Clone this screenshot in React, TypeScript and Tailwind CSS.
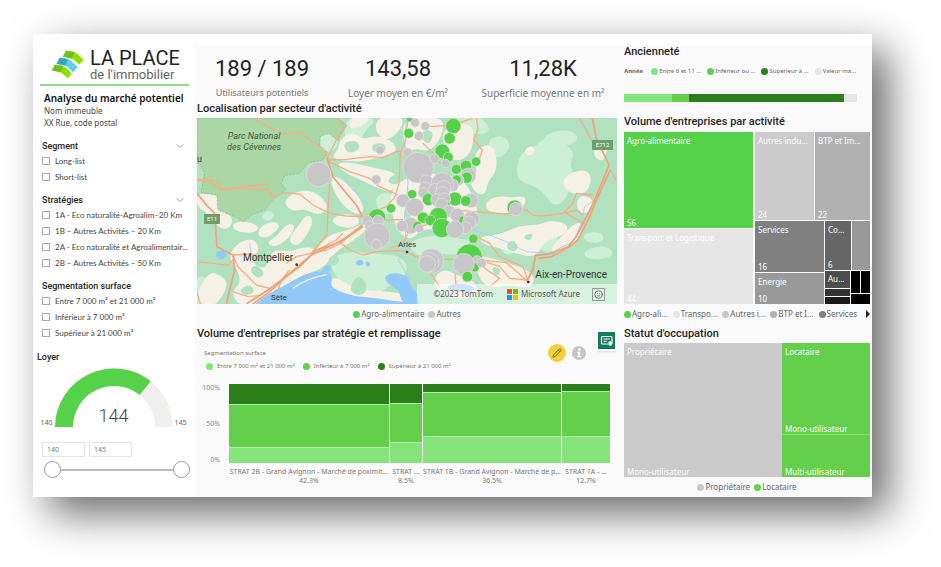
// src/App.tsx
// Market analysis dashboard for La Place de l'immobilier

import React, { useState } from "react";
import { ChevronDown, Pencil, Smile } from "lucide-react";

const COLORS = {
  green: "#56d14a",
  grey: "#c8c6c8",
  land: "#b1e2c0",
  road: "#f6ae84",
  highway: "#f3a074",
  beige: "#f6f1e6",
  pale: "#cdefd6",
  water: "#92c9fb",
};

interface LegendItem {
  label: string;
  dot: string;
}

const SEGMENT = ["Long-list", "Short-list"];
const STRATEGIES = [
  "1A - Eco naturalité-Agroalim–20 Km",
  "1B – Autres Activités – 20 Km",
  "2A - Eco naturalité et Agroalimentair...",
  "2B – Autres Activités – 50 Km",
];
const SURFACES = [
  "Entre 7 000 m² et 21 000 m²",
  "Inférieur à 7 000 m²",
  "Supérieur à 21 000 m²",
];

const KPIS = [
  { value: "189 / 189", label: "Utilisateurs potentiels", size: "text-[9px]" },
  { value: "143,58", label: "Loyer moyen en €/m²", size: "text-[10px]" },
  { value: "11,28K", label: "Superficie moyenne en m²", size: "text-[10px]" },
];

const MAP_LEGEND: LegendItem[] = [
  { label: "Agro-alimentaire", dot: "bg-[#56d14a]" },
  { label: "Autres", dot: "bg-[#c8c8c8]" },
];

const AGE_LEGEND: LegendItem[] = [
  { label: "Entre 6 et 11 ...", dot: "bg-[#86e57a]" },
  { label: "Inférieur ou ...", dot: "bg-[#64cf4b]" },
  { label: "Supérieur à ...", dot: "bg-[#2b7f1b]" },
  { label: "Valeur ma...", dot: "bg-[#e6e6e6]" },
];

const SURFACE_LEGEND: LegendItem[] = [
  { label: "Entre 7 000 m² et 21 000 m²", dot: "bg-[#86e57a]" },
  { label: "Inférieur à 7 000 m²", dot: "bg-[#64cf4b]" },
  { label: "Supérieur à 21 000 m²", dot: "bg-[#2b7f1b]" },
];

const ACTIVITY_LEGEND: LegendItem[] = [
  { label: "Agro-ali...", dot: "bg-[#56d14a]" },
  { label: "Transpo...", dot: "bg-[#e6e6e6]" },
  { label: "Autres i...", dot: "bg-[#c8c8c8]" },
  { label: "BTP et I...", dot: "bg-[#b0b0b0]" },
  { label: "Services", dot: "bg-[#808080]" },
];

const STATUS_LEGEND: LegendItem[] = [
  { label: "Propriétaire", dot: "bg-[#c8c8c8]" },
  { label: "Locataire", dot: "bg-[#64cf4b]" },
];

// width of each column, then dark / medium / light shares of its height
const MEKKO = [
  { name: "STRAT 2B - Grand Avignon - Marché de poximit...", share: 42.3, parts: [26, 55, 19] },
  { name: "STRAT ...", share: 8.5, parts: [25, 49, 26] },
  { name: "STRAT 1B - Grand Avignon - Marché de p...", share: 36.5, parts: [10, 56, 34] },
  { name: "STRAT 1A - ...", share: 12.7, parts: [9, 57, 34] },
];
const MEKKO_FILLS = ["bg-[#2b7f1b]", "bg-[#64cf4b]", "bg-[#86e57a]"];

// [x, y, radius, is agro-alimentaire]
const BUBBLES: [number, number, number, boolean][] = [
  [387, 193, 37, false],
  [571, 120, 13, false],
  [560, 209, 14, false],
  [604, 295, 14, true],
  [562, 322, 26, true],
  [533, 332, 16, false],
  [566, 332, 17, false],
  [540, 348, 15, false],
  [562, 378, 39, false],
  [560, 404, 15, false],
  [660, 26, 10, true],
  [676, 38, 13, false],
  [707, 48, 13, false],
  [688, 78, 14, false],
  [657, 70, 15, true],
  [791, 48, 23, true],
  [780, 85, 17, true],
  [654, 128, 14, false],
  [686, 173, 46, false],
  [758, 124, 22, true],
  [776, 142, 15, true],
  [735, 146, 14, false],
  [768, 160, 13, false],
  [800, 178, 15, true],
  [829, 168, 17, true],
  [859, 155, 14, true],
  [836, 197, 23, false],
  [831, 203, 17, true],
  [806, 210, 17, false],
  [801, 209, 14, true],
  [710, 215, 20, false],
  [788, 226, 19, false],
  [758, 222, 34, false],
  [706, 234, 18, false],
  [700, 248, 15, false],
  [667, 253, 14, true],
  [640, 272, 20, false],
  [675, 292, 27, false],
  [717, 268, 19, true],
  [737, 240, 20, false],
  [762, 234, 22, false],
  [758, 252, 22, false],
  [796, 267, 21, true],
  [742, 270, 19, false],
  [764, 268, 19, false],
  [768, 286, 14, true],
  [756, 284, 19, false],
  [844, 272, 22, false],
  [828, 273, 16, true],
  [778, 304, 18, false],
  [803, 316, 21, false],
  [746, 319, 27, true],
  [700, 323, 17, true],
  [722, 331, 16, true],
  [822, 332, 15, true],
  [845, 328, 24, false],
  [838, 338, 20, false],
  [828, 353, 18, false],
  [662, 347, 25, false],
  [684, 349, 15, true],
  [689, 355, 13, false],
  [637, 348, 17, false],
  [756, 354, 29, true],
  [796, 358, 26, false],
  [975, 293, 23, true],
  [979, 297, 20, false],
  [851, 402, 14, false],
  [851, 386, 14, true],
  [839, 441, 39, true],
  [862, 452, 15, false],
  [855, 472, 14, true],
  [822, 462, 32, false],
  [876, 459, 14, false],
  [833, 500, 16, true],
  [725, 453, 37, false],
  [718, 457, 30, false],
  [712, 462, 25, false],
];

const ROADS = [
  "M190 24 L225 45 L275 72 L335 68 L360 90 L400 115 L418 150",
  "M445 24 L465 55 L440 90 L412 145",
  "M22 210 L60 215 L95 240 L150 235 L235 240 L250 262 L285 248 L330 252 L370 285 L420 310 L470 318 L520 320",
  "M235 240 L232 222 L95 238 L85 212 L22 208",
  "M418 150 L470 148 L540 140 L580 142 L620 125 L660 122",
  "M418 155 L480 185 L540 205 L570 230 L625 255",
  "M655 24 L648 90 L632 130 L628 220 L615 262 L590 290 L520 320",
  "M418 150 L420 220 L415 300 L412 372 L365 430",
  "M22 455 L70 460 L115 466 L130 450",
  "M130 435 L145 470 L200 525 L240 535",
  "M130 435 L180 432 L220 444",
  "M290 460 L320 440 L365 430 L440 390 L460 370",
  "M455 400 L470 385 L520 350",
  "M365 430 L410 420 L455 400 L480 420 L520 435 L560 425 L620 422 L650 425 L690 445 L780 448 L860 448",
  "M520 330 L600 330 L640 328",
  "M690 350 L760 330 L800 300 L850 305 L950 312 L1010 300 L1030 316 L1060 318 L1120 310 L1160 300 L1180 315",
  "M22 545 L32 582",
  "M130 545 L175 560 L215 556",
  "M265 540 L275 510 L300 480",
  "M720 50 L790 45 L850 24",
  "M860 24 L865 60 L852 90 L878 120 L868 150",
  "M700 100 L730 130 L760 170",
  "M660 360 L640 400 L600 415",
  "M860 380 L900 400 L930 440 L1000 470 L1015 510",
  "M700 460 L730 500 L750 530",
  "M796 490 L800 540",
  "M860 440 L885 455 L930 470 L960 505 L1015 510 L1030 470 L1038 435",
  "M860 455 L900 485 L930 505 L900 530",
  "M870 450 L950 458 L1010 510",
  "M1120 310 L1150 280 L1160 250 L1210 255",
  "M1130 310 L1190 345",
  "M1168 24 L1190 60 L1210 100",
  "M1262 180 L1282 215",
];

const HIGHWAYS = [
  "M22 250 L50 285 L75 310 L82 410 L130 435 L135 480 L120 540 L110 582",
  "M412 145 L430 200 L470 250 L500 285 L518 320",
  "M190 582 L240 545 L300 490 L365 435 L440 400 L520 350",
  "M170 582 L235 540 L330 470 L380 420 L455 395 L518 345",
  "M1208 24 L1220 85 L1258 165 L1240 210 L1215 270 L1195 310 L1160 380 L1135 410 L1080 432 L1038 436 L1030 480 L1010 515",
  "M1262 180 L1225 260 L1200 320 L1165 390 L1140 410 L1085 440 L1045 445",
];

const BEIGE_AREAS = [
  "22,258 60,255 84,262 86,300 125,322 118,350 95,352 70,325 50,300 30,290",
  "150,400 190,390 205,420 178,440 190,470 225,480 240,462 250,425 300,430 330,420 365,415 380,430 400,400 430,375 480,365 520,345 525,360 480,392 430,425 400,470 340,490 285,520 235,548 200,582 150,582 130,545 160,520 145,470 120,440",
  "235,400 262,385 290,350 312,345 300,375 262,405",
  "300,390 330,350 352,318 366,330 350,370 322,405",
  "22,560 60,490 90,500 110,520 92,560 70,582 50,582",
  "285,275 320,250 360,245 400,270 410,300 380,310 345,290 310,300",
  "130,345 160,338 205,350 190,365 145,360",
  "205,372 225,345 262,340 262,355 230,380",
  "430,140 450,125 455,90 490,70 520,95 560,80 610,100 615,128 560,138 520,150 470,148",
  "440,160 500,165 560,180 610,190 625,220 600,240 570,232 530,212 480,190",
  "425,200 460,215 500,255 520,300 505,310 470,290 440,250",
  "425,330 470,315 505,325 500,345 460,350",
  "490,24 540,24 510,48 480,52",
  "570,24 640,24 625,60 590,90 560,60",
  "640,24 760,24 750,80 720,120 680,110 650,120",
  "760,60 840,40 850,90 830,140 790,150 770,110",
  "870,120 900,105 918,145 912,190 890,210 885,250 860,245 845,215 870,190 855,150",
  "600,240 680,195 800,200 845,250 865,330 820,370 700,345 660,390 620,350",
  "890,280 925,262 970,268 1005,262 1000,285 960,308 900,302",
  "870,385 930,380 990,352 1050,350 1080,335 1130,345 1125,370 1060,390 1045,425 1020,435 980,425 930,410 890,400",
  "860,440 930,455 1000,480 1030,500 1020,530 960,520 900,530 870,500",
  "1120,215 1150,190 1195,185 1200,220 1180,250 1140,245",
  "1170,260 1210,270 1190,310 1165,295",
  "1085,425 1110,390 1150,350 1175,340 1160,385 1125,420",
  "1215,110 1250,100 1240,150 1220,140",
  "425,505 455,515 495,545 600,550 655,560 650,582 520,582 440,550",
  "730,520 760,480 800,500 860,520 850,560 780,560",
  "1010,120 1030,112 1028,130 1012,132",
];

const PALE_AREAS = [
  "470,24 560,24 520,60 500,110 470,95",
  "392,80 420,72 445,95 425,125 397,112",
  "985,170 1000,130 1040,115 1060,90 1110,100 1150,125 1135,165 1150,200 1125,265 1095,285 1070,250 1040,225 990,210",
  "1060,90 1090,70 1140,65 1165,85 1130,105 1085,105",
  "790,24 870,24 900,60 870,70 830,60 800,60",
  "900,90 940,80 960,110 930,140 905,130",
  "930,400 965,392 975,425 945,430",
  "22,500 60,510 70,540 50,582 22,582",
  "420,450 480,430 560,435 640,445 650,490 600,520 560,550 500,545 450,510",
  "660,400 720,380 820,390 870,410 830,430 740,425 680,435",
  "560,260 600,250 625,290 600,310 570,300",
  "540,185 580,195 585,215 550,212",
  "218,318 240,305 252,318 232,330",
  "1060,395 1100,385 1110,410 1060,425",
  "1180,430 1230,410 1270,425 1250,440 1210,445",
  "1180,375 1230,370 1240,390 1200,395",
];

// woods inside the plains
const WOODS = [
  "180,480 200,465 225,490 205,505",
  "460,100 500,92 510,118 475,130",
  "545,105 580,100 590,122 555,128",
  "590,215 620,190 628,225",
  "905,470 935,478 920,500",
  "640,300 665,310 655,335",
  "952,400 975,392 985,420 958,422",
  "1000,380 1030,370 1020,392",
  "150,540 180,525 195,545 165,556",
  "415,445 440,435 450,455 425,470",
  "480,540 500,500 525,510 530,545 505,556",
  "700,60 730,66 722,100 700,92",
];

const WATER_AREAS = [
  "190,590 240,550 285,530 310,515 345,495 385,485 420,488 425,505 420,530 450,548 500,562 560,566 620,576 670,580 670,600 190,600",
  "585,500 612,490 640,495 660,512 648,535 660,560 632,548 615,528 595,520",
  "630,495 655,500 662,530 680,548 690,590 650,590 628,550",
  "395,485 410,466 425,470 415,490",
  "78,430 100,422 112,435 98,448 84,444",
  "498,455 515,450 522,460 506,468",
  "528,454 542,460 534,472",
  "768,530 800,522 850,528 850,545 800,545",
];

// rounds a "x,y x,y ..." outline by running curves through the edge midpoints
function blob(points: string) {
  const pts = points.split(" ").map((p) => p.split(",").map(Number));
  const mid = (i: number) => {
    const [ax, ay] = pts[i % pts.length];
    const [bx, by] = pts[(i + 1) % pts.length];
    return `${(ax + bx) / 2} ${(ay + by) / 2}`;
  };
  const curves = pts.map((_, i) => {
    const [x, y] = pts[(i + 1) % pts.length];
    return `Q${x} ${y} ${mid(i + 1)}`;
  });
  return `M${mid(0)} ${curves.join(" ")} Z`;
}

function Blobs({ areas, fill, edge }: { areas: string[]; fill: string; edge: number }) {
  return (
    <g fill={fill} stroke={fill} strokeWidth={edge} strokeLinejoin="round">
      {areas.map((area) => (
        <path key={area} d={blob(area)} />
      ))}
    </g>
  );
}

function Logo() {
  return (
    <div className="flex items-center gap-1.5 pl-[19px] h-[39px]">
      <svg viewBox="0 0 100 90" className="w-8 h-[29px] shrink-0" aria-hidden="true">
        <path d="M44 2 L66 5 Q74 7 80 12 L99 31 L85 46 L68 30 Q63 26 56 25 L34 21 Z" fill="#8ee000" />
        <path d="M44 2 L70 6 L62 26 L34 21 Z" fill="#68c51c" />
        <path d="M24 24 L46 27 Q54 29 60 34 L80 53 L66 69 L48 52 Q43 48 36 47 L14 43 Z" fill="#5cd0e2" />
        <path d="M24 24 L50 28 L42 48 L14 43 Z" fill="#3aa2c4" />
        <path d="M9 46 L31 49 Q39 51 45 56 L62 73 L50 89 L32 73 Q27 69 20 68 L0 64 Z" fill="#8ee000" />
        <path d="M9 46 L35 50 L27 69 L0 64 Z" fill="#68c51c" />
      </svg>
      <div className="font-['Roboto',sans-serif] whitespace-nowrap">
        <div className="text-[20px] leading-[19px] text-[#222]">LA PLACE</div>
        <div className="text-[13px] leading-[13px] text-[#666]">de l'immobilier</div>
      </div>
    </div>
  );
}

function Title({ children }: { children: React.ReactNode }) {
  return (
    <h2 className="font-['Roboto',sans-serif] font-medium text-[11px] leading-[14px] text-[#252525] whitespace-nowrap">
      {children}
    </h2>
  );
}

function CheckGroup({
  title,
  items,
  collapsible,
}: {
  title: string;
  items: string[];
  collapsible?: boolean;
}) {
  return (
    <fieldset className="pl-[9px] pr-2 mb-2 min-w-0">
      <legend className="flex w-full h-3.5 items-center justify-between text-[9px] leading-[14px] font-medium text-[#252525] font-['Roboto',sans-serif]">
        {title}
        {collapsible && (
          <button type="button" aria-label={title}>
            <ChevronDown className="w-3 h-3 text-[#777]" strokeWidth={1.5} />
          </button>
        )}
      </legend>
      {items.map((item) => (
        <label key={item} className="flex h-4 items-center gap-[5px] font-['Lato',sans-serif] text-[8px] text-[#444] whitespace-nowrap">
          <input
            type="checkbox"
            className="appearance-none w-2 h-2 shrink-0 border border-[#a8a8a8] bg-white checked:bg-[#56d14a]"
          />
          {item}
        </label>
      ))}
    </fieldset>
  );
}

function Legend({
  items,
  className,
}: {
  items: LegendItem[];
  className: string;
}) {
  return (
    <ul className={`flex items-center whitespace-nowrap text-[#666] ${className}`}>
      {items.map((item) => (
        <li key={item.label} className="flex items-center gap-px">
          <span className={`w-[7px] h-[7px] rounded-full shrink-0 ${item.dot}`} />
          {item.label}
        </li>
      ))}
    </ul>
  );
}

function RentGauge() {
  const [low, setLow] = useState(140);
  const [high, setHigh] = useState(145);
  const range =
    "col-start-1 row-start-1 w-full h-[17px] appearance-none bg-transparent pointer-events-none [&::-webkit-slider-thumb]:appearance-none [&::-webkit-slider-thumb]:pointer-events-auto [&::-webkit-slider-thumb]:w-[17px] [&::-webkit-slider-thumb]:h-[17px] [&::-webkit-slider-thumb]:rounded-full [&::-webkit-slider-thumb]:border [&::-webkit-slider-thumb]:border-[#999] [&::-webkit-slider-thumb]:bg-white";

  return (
    <section className="pt-0.5">
      <h2 className="pl-1 font-['Roboto',sans-serif] font-medium text-[9px] leading-3 text-[#252525]">Loyer</h2>
      <div className="flex items-end justify-center gap-0.5 mt-1 text-[7px] leading-[8px] text-[#666]">
        <span>140</span>
        <div className="grid items-end justify-items-center">
          <svg viewBox="0 0 118 60" className="col-start-1 row-start-1 w-[118px] h-[60px]" aria-hidden="true">
            <path d="M95.8 14.3 A59 59 0 0 1 118 60 H100 A41 41 0 0 0 84.6 28 Z" fill="#f1f0ef" />
            <path d="M0 60 A59 59 0 0 1 95.8 14.3 L84.6 28 A41 41 0 0 0 18 60 Z" fill="#56d14a" />
          </svg>
          <span className="col-start-1 row-start-1 font-['Roboto',sans-serif] font-light text-[18px] leading-[22px] text-[#444]">
            144
          </span>
        </div>
        <span>145</span>
      </div>
      <div className="flex gap-1 pl-[9px] mt-[15px]">
        <input
          aria-label="Loyer minimum"
          className="w-[43px] h-[15px] border border-[#e4e4e4] px-1 text-[7px] text-[#777]"
          value={low}
          onChange={(e) => setLow(Number(e.target.value))}
        />
        <input
          aria-label="Loyer maximum"
          className="w-[43px] h-[15px] border border-[#e4e4e4] px-1 text-[7px] text-[#777]"
          value={high}
          onChange={(e) => setHigh(Number(e.target.value))}
        />
      </div>
      <div className="grid items-center pl-[11px] pr-1 mt-1">
        <div className="col-start-1 row-start-1 h-0.5 mx-2 bg-[#bdbdbd]" />
        <input type="range" aria-label="Borne basse" min={140} max={145} value={low} onChange={(e) => setLow(Number(e.target.value))} className={range} />
        <input type="range" aria-label="Borne haute" min={140} max={145} value={high} onChange={(e) => setHigh(Number(e.target.value))} className={range} />
      </div>
    </section>
  );
}

function ActivityMap() {
  return (
    <div className="relative mt-0.5 h-[186px] overflow-hidden font-['Roboto',sans-serif] text-[#333] whitespace-nowrap">
      <svg viewBox="22 24 1260 558" preserveAspectRatio="xMidYMid slice" className="w-full h-full" aria-hidden="true">
        <rect x="22" y="24" width="1260" height="558" fill={COLORS.land} />
        <Blobs areas={PALE_AREAS} fill={COLORS.pale} edge={10} />
        <Blobs areas={BEIGE_AREAS} fill={COLORS.beige} edge={10} />
        <Blobs areas={WOODS} fill={COLORS.land} edge={4} />
        <path
          d="M22 24 H445 L472 48 L455 65 L445 92 L418 70 L392 78 L390 108 L412 125 L400 150 L355 158 L330 190 L285 196 L275 220 L288 240 L250 268 L225 300 L190 312 L162 335 L140 322 L85 300 L82 255 L34 248 L45 190 L30 160 L22 160 Z"
          fill="#aad7a5"
          stroke="#7fbb88"
          strokeWidth="2"
          strokeDasharray="8 3"
        />
        <Blobs areas={WATER_AREAS} fill={COLORS.water} edge={4} />
        <path d="M310 535 Q350 505 410 494" fill="none" stroke={COLORS.beige} strokeWidth="4" />
        <g fill="none" stroke="#a8d4f5" strokeWidth="3">
          <path d="M650 24 L645 120 L655 220 L645 320 L650 420 L625 450 L650 490 L670 540" />
          <path d="M850 360 L900 375 L950 395 L1010 425 L1080 430 L1150 395 L1175 340 L1185 290 L1215 270" />
          <path d="M1170 24 L1200 70 L1225 110 L1262 150" />
          <path d="M180 400 L185 440 L160 455" />
          <path d="M455 190 L480 230 L530 280" />
        </g>
        <g fill="none" stroke={COLORS.road} strokeWidth="4" strokeLinejoin="round">
          {ROADS.map((d) => (
            <path key={d} d={d} />
          ))}
        </g>
        <g fill="none" stroke={COLORS.highway} strokeWidth="5" strokeLinejoin="round">
          {HIGHWAYS.map((d) => (
            <path key={d} d={d} />
          ))}
        </g>
        {BUBBLES.map(([x, y, r, agro]) => (
          <circle
            key={`${x}-${y}-${r}`}
            cx={x}
            cy={y}
            r={r}
            fill={agro ? COLORS.green : COLORS.grey}
            stroke="#e6e6e6"
            strokeWidth="2"
          />
        ))}
        <circle cx="321" cy="464" r="4" fill="#333" />
        <circle cx="652" cy="426" r="4" fill="#333" />
        <circle cx="1016" cy="516" r="4" fill="#333" />
      </svg>
      <span className="absolute left-[30px] top-[13px] text-[9px] leading-[11px] italic text-center text-[#3c5a3c]">
        Parc National
        <br />
        des Cévennes
      </span>
      <span className="absolute left-0 top-[35px] text-[9px] leading-3">u</span>
      <span className="absolute left-[7px] top-[96px] w-4 text-center bg-[#6c9f6c] text-white text-[6px] leading-[10px]">E11</span>
      <span className="absolute right-1 top-[22px] w-[21px] text-center bg-[#6c9f6c] text-white text-[6px] leading-[10px]">E712</span>
      <span className="absolute left-[46px] top-[134px] text-[10px] leading-3">Montpellier</span>
      <span className="absolute left-[74px] top-[174px] text-[8px] leading-3">Sète</span>
      <span className="absolute left-[201px] top-[121px] text-[8px] leading-3">Arles</span>
      <span className="absolute right-[10px] top-[151px] text-[10px] leading-3">Aix-en-Provence</span>
      <div className="absolute right-0 bottom-0 flex items-center h-5 pl-[17px] pr-3 bg-white/50 font-['Noto_Sans',sans-serif] text-[8px] text-[#555]">
        <span>©2023 TomTom</span>
        <svg viewBox="0 0 11 11" className="w-[11px] h-[11px] ml-[14px] mr-[3px]" aria-hidden="true">
          <rect width="5" height="5" fill="#f25022" />
          <rect x="6" width="5" height="5" fill="#7fba00" />
          <rect y="6" width="5" height="5" fill="#00a4ef" />
          <rect x="6" y="6" width="5" height="5" fill="#ffb900" />
        </svg>
        <span>Microsoft Azure</span>
        <button type="button" aria-label="Feedback" className="ml-3 w-[13px] h-[13px] flex items-center justify-center border border-[#999]">
          <Smile className="w-[9px] h-[9px]" />
        </button>
      </div>
    </div>
  );
}

function StrategyChart() {
  return (
    <section className="mt-[3px]">
      <div className="flex justify-between h-11">
        <div>
          <Title>Volume d'entreprises par stratégie et remplissage</Title>
          <div className="pl-[7px] mt-[7px] text-[6px] leading-[10px] text-[#777]">Segmentation surface</div>
          <ul className="flex gap-2 pl-[9px] mt-[3px] text-[6px] leading-[10px] text-[#777] whitespace-nowrap">
            {SURFACE_LEGEND.map((item) => (
              <li key={item.label} className="flex items-center gap-1">
                <span className={`w-[7px] h-[7px] rounded-full ${item.dot}`} />
                {item.label}
              </li>
            ))}
          </ul>
        </div>
        <div className="flex items-start gap-2.5">
          <div className="flex items-center gap-1.5 pt-[17px]">
            <button type="button" aria-label="Modifier" className="w-[18px] h-[18px] rounded-full bg-[#f2cf3b] flex items-center justify-center">
              <Pencil className="w-2.5 h-2.5 text-[#6b5b1c]" />
            </button>
            <button type="button" aria-label="Information" className="w-3.5 h-3.5 rounded-full bg-[#c4c4c4] flex items-center justify-center">
              <svg viewBox="0 0 14 14" className="w-3.5 h-3.5" fill="#fff" aria-hidden="true">
                <circle cx="7.4" cy="3.6" r="1.3" />
                <path d="M5.4 5.8 H8.2 V10 H9 V11.2 H5.2 V10 H6 V7 H5.4 Z" />
              </svg>
            </button>
          </div>
          <button type="button" aria-label="Commentaires" className="p-0.5 mt-[3px] bg-white shadow">
            <svg viewBox="0 0 17 17" className="w-[17px] h-[17px]" aria-hidden="true">
              <rect width="17" height="17" fill="#137a62" />
              <rect x="3.5" y="4.5" width="10.5" height="7.5" rx="1" fill="#137a62" stroke="#fff" strokeWidth="1.2" />
              <path d="M5.5 7 H12 M5.5 9.3 H9" stroke="#fff" strokeWidth="1" />
              <circle cx="12.2" cy="10.6" r="1.7" fill="#fff" />
              <path d="M11 11.5 V14 L12.2 13.2 L13.4 14 V11.5 Z" fill="#fff" />
            </svg>
          </button>
        </div>
      </div>
      <div className="flex gap-[9px] mt-[13px] pr-[7px]">
        <div className="flex flex-col justify-between w-[23px] h-[79px] text-right text-[7px] leading-none text-[#888]">
          <span>100%</span>
          <span>50%</span>
          <span>0%</span>
        </div>
        <div className="flex flex-1 min-w-0 gap-px">
          {MEKKO.map((col) => (
            <div key={col.name} className="min-w-0 basis-0" style={{ flexGrow: col.share }}>
              <div className="flex flex-col gap-px h-[79px] bg-[#b8efae]">
                {col.parts.map((part, i) => (
                  <div key={i} className={`basis-0 ${MEKKO_FILLS[i]}`} style={{ flexGrow: part }} />
                ))}
              </div>
              <div className="flex flex-col items-center mt-1 text-[7px] leading-[9px] text-[#777] whitespace-nowrap">
                <span>{col.name}</span>
                <span>{col.share}%</span>
              </div>
            </div>
          ))}
        </div>
      </div>
    </section>
  );
}

function Tile({
  className,
  label,
  value,
}: {
  className: string;
  label?: string;
  value?: string;
}) {
  return (
    <div className={`flex flex-col justify-between min-w-0 min-h-0 overflow-hidden px-[3px] pt-[3px] text-[8px] leading-[11px] text-white whitespace-nowrap ${className}`}>
      <span>{label}</span>
      <span>{value}</span>
    </div>
  );
}

function ActivityTreemap() {
  return (
    <div className="grid grid-cols-[129fr_115fr] gap-0.5 h-[172px] mt-[3px]">
      <div className="grid grid-rows-[95fr_75fr] gap-px min-h-0">
        <Tile className="bg-[#56d14a]" label="Agro-alimentaire" value="56" />
        <Tile className="bg-[#e6e6e6]" label="Transport et Logistique" value="44" />
      </div>
      <div className="grid grid-rows-[88fr_83fr] gap-px min-h-0">
        <div className="grid grid-cols-[59fr_55fr] gap-px min-h-0">
          <Tile className="bg-[#cbcbcb]" label="Autres indu..." value="24" />
          <Tile className="bg-[#b1b1b1]" label="BTP et Im..." value="22" />
        </div>
        <div className="grid grid-cols-[69fr_45fr] gap-px min-h-0">
          <div className="grid grid-rows-[50fr_31fr] gap-px min-h-0">
            <Tile className="bg-[#808080]" label="Services" value="16" />
            <Tile className="bg-[#999]" label="Energie" value="10" />
          </div>
          <div className="grid grid-rows-[49fr_33fr] gap-px min-h-0">
            <div className="grid grid-cols-[26fr_18fr] gap-px min-h-0">
              <Tile className="bg-[#666]" label="Co..." value="6" />
              <Tile className="bg-[#999]" />
            </div>
            <div className="grid grid-cols-[25fr_19fr] gap-px min-h-0">
              <div className="grid grid-rows-[16fr_7fr_7fr] gap-px min-h-0">
                <div className="bg-[#4d4d4d] px-[3px] min-h-0 text-[8px] leading-[15px] text-white">Au...</div>
                <div className="bg-[#333]" />
                <div className="bg-[#1a1a1a]" />
              </div>
              <div className="grid grid-cols-2 grid-rows-[22fr_10fr] gap-px">
                <div className="bg-black" />
                <div className="bg-black" />
                <div className="bg-black col-span-2" />
              </div>
            </div>
          </div>
        </div>
      </div>
    </div>
  );
}

export default function App() {
  return (
    <main className="min-h-screen bg-white pl-[33px] pr-[69px] pt-[34px] font-['Noto_Sans',sans-serif]">
      <div className="grid grid-cols-[161px_minmax(0,1fr)_248px] pt-[11px] bg-white shadow-[16px_16px_40px_rgba(0,0,0,0.6)]">
        <aside>
          <Logo />
          <div className="h-0.5 ml-[7px] mr-[5px] bg-[#8fd98a]" />
          <div className="pl-[11px] pt-[5px] mb-[10px] whitespace-nowrap">
            <h1 className="text-[10px] leading-[14px] font-semibold text-[#111]">Analyse du marché potentiel</h1>
            <p className="text-[8px] leading-3 text-[#444]">Nom immeuble</p>
            <p className="text-[8px] leading-3 text-[#444]">XX Rue, code postal</p>
          </div>
          <CheckGroup title="Segment" items={SEGMENT} collapsible />
          <CheckGroup title="Stratégies" items={STRATEGIES} collapsible />
          <CheckGroup title="Segmentation surface" items={SURFACES} />
          <RentGauge />
        </aside>

        <div className="bg-[#fafafa] pl-[3px] pr-[7px] pb-3">
          <div className="grid grid-cols-[130fr_142fr_148fr] h-[57px] pt-3">
            {KPIS.map((kpi) => (
              <div key={kpi.label} className="flex flex-col items-center gap-1.5 whitespace-nowrap">
                <span className="font-['Roboto',sans-serif] text-[22px] leading-6 text-[#222]">{kpi.value}</span>
                <span className={`leading-3 text-[#777] ${kpi.size}`}>{kpi.label}</span>
              </div>
            ))}
          </div>
          <Title>Localisation par secteur d'activité</Title>
          <ActivityMap />
          <Legend items={MAP_LEGEND} className="justify-center gap-1 h-5 text-[8px]" />
          <StrategyChart />
        </div>

        <div className="bg-[#fafafa] pr-0.5">
          <Title>Ancienneté</Title>
          <div className="flex items-center gap-2 mt-[7px] pr-3.5 text-[6px] leading-[10px]">
            <span className="font-bold text-[#666]">Année</span>
            <Legend items={AGE_LEGEND} className="flex-1 justify-between" />
          </div>
          <div className="grid grid-cols-[48fr_17fr_155fr_13fr] h-2 mt-[18px] mr-[13px]">
            <div className="bg-[#86e57a]" />
            <div className="bg-[#64cf4b]" />
            <div className="bg-[#2b7f1b]" />
            <div className="bg-[#e6e6e6]" />
          </div>
          <div className="mt-[13px]">
            <Title>Volume d'entreprises par activité</Title>
          </div>
          <ActivityTreemap />
          <div className="flex items-center justify-between h-5">
            <Legend items={ACTIVITY_LEGEND} className="gap-[5px] text-[8px]" />
            <button type="button" aria-label="Suivant">
              <svg viewBox="0 0 4 8" className="w-1 h-2" aria-hidden="true">
                <path d="M0 0 L4 4 L0 8 Z" fill="#222" />
              </svg>
            </button>
          </div>
          <div className="mt-[3px]">
            <Title>Statut d'occupation</Title>
          </div>
          <div className="grid grid-cols-[158fr_88fr] h-[134px] mt-0.5">
            <Tile className="bg-[#cacaca]" label="Propriétaire" value="Mono-utilisateur" />
            <div className="grid grid-rows-[92fr_42fr] gap-px bg-[#86dd72] min-h-0">
              <Tile className="bg-[#64cf4b]" label="Locataire" value="Mono-utilisateur" />
              <Tile className="bg-[#64cf4b]" value="Multi-utilisateur" />
            </div>
          </div>
          <Legend items={STATUS_LEGEND} className="justify-center gap-1 h-5 text-[8px]" />
        </div>
      </div>
    </main>
  );
}
